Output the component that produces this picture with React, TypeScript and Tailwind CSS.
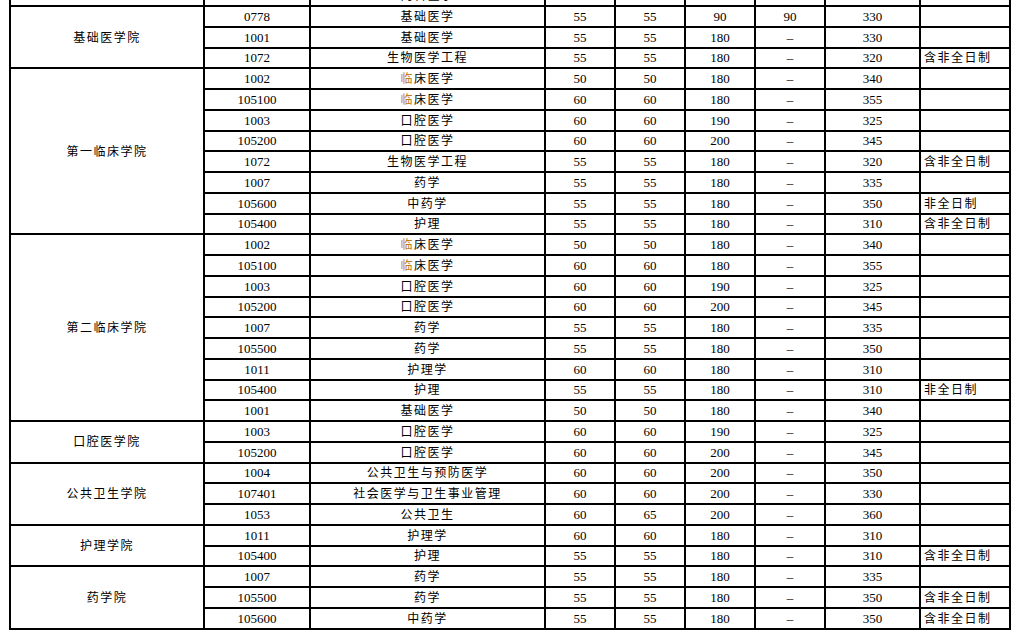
import React from 'react'

type Row = [string, string, string, string, string, string, string, string]

type Group = { college: string; rows: Row[] }

const D = '–'

// partial row cut off at the top of the screenshot
const topRow: Row = ['100104', '内科医学', '55', '55', '180', '180', '330', '']

const groups: Group[] = [
  {
    college: '基础医学院',
    rows: [
      ['0778', '基础医学', '55', '55', '90', '90', '330', ''],
      ['1001', '基础医学', '55', '55', '180', D, '330', ''],
      ['1072', '生物医学工程', '55', '55', '180', D, '320', '含非全日制'],
    ],
  },
  {
    college: '第一临床学院',
    rows: [
      ['1002', '临床医学', '50', '50', '180', D, '340', ''],
      ['105100', '临床医学', '60', '60', '180', D, '355', ''],
      ['1003', '口腔医学', '60', '60', '190', D, '325', ''],
      ['105200', '口腔医学', '60', '60', '200', D, '345', ''],
      ['1072', '生物医学工程', '55', '55', '180', D, '320', '含非全日制'],
      ['1007', '药学', '55', '55', '180', D, '335', ''],
      ['105600', '中药学', '55', '55', '180', D, '350', '非全日制'],
      ['105400', '护理', '55', '55', '180', D, '310', '含非全日制'],
    ],
  },
  {
    college: '第二临床学院',
    rows: [
      ['1002', '临床医学', '50', '50', '180', D, '340', ''],
      ['105100', '临床医学', '60', '60', '180', D, '355', ''],
      ['1003', '口腔医学', '60', '60', '190', D, '325', ''],
      ['105200', '口腔医学', '60', '60', '200', D, '345', ''],
      ['1007', '药学', '55', '55', '180', D, '335', ''],
      ['105500', '药学', '55', '55', '180', D, '350', ''],
      ['1011', '护理学', '60', '60', '180', D, '310', ''],
      ['105400', '护理', '55', '55', '180', D, '310', '非全日制'],
      ['1001', '基础医学', '50', '50', '180', D, '340', ''],
    ],
  },
  {
    college: '口腔医学院',
    rows: [
      ['1003', '口腔医学', '60', '60', '190', D, '325', ''],
      ['105200', '口腔医学', '60', '60', '200', D, '345', ''],
    ],
  },
  {
    college: '公共卫生学院',
    rows: [
      ['1004', '公共卫生与预防医学', '60', '60', '200', D, '350', ''],
      ['107401', '社会医学与卫生事业管理', '60', '60', '200', D, '330', ''],
      ['1053', '公共卫生', '60', '65', '200', D, '360', ''],
    ],
  },
  {
    college: '护理学院',
    rows: [
      ['1011', '护理学', '60', '60', '180', D, '310', ''],
      ['105400', '护理', '55', '55', '180', D, '310', '含非全日制'],
    ],
  },
  {
    college: '药学院',
    rows: [
      ['1007', '药学', '55', '55', '180', D, '335', ''],
      ['105500', '药学', '55', '55', '180', D, '350', '含非全日制'],
      ['105600', '中药学', '55', '55', '180', D, '350', '含非全日制'],
    ],
  },
]

const spanClass: Record<number, string> = {
  1: 'row-span-1',
  2: 'row-span-2',
  3: 'row-span-3',
  8: 'row-span-8',
  9: 'row-span-9',
}

const cell = 'bg-white flex items-center justify-center overflow-hidden leading-none'
const zh = 'text-[12px] tracking-[1.5px] pt-[1px]'

function Major({ name }: { name: string }) {
  // the 临 glyph shows up tinted in the source scan
  if (name.startsWith('临')) {
    return (
      <span>
        <span className="text-[#c07d1c]">临</span>
        {name.slice(1)}
      </span>
    )
  }
  return <span>{name}</span>
}

function RowCells({ row }: { row: Row }) {
  const [code, major, a, b, c, d, total, note] = row
  return (
    <>
      <div className={cell}>{code}</div>
      <div className={`${cell} ${zh}`}>
        <Major name={major} />
      </div>
      <div className={cell}>{a}</div>
      <div className={cell}>{b}</div>
      <div className={cell}>{c}</div>
      <div className={cell}>{d}</div>
      <div className={cell}>{total}</div>
      <div className={`bg-white flex items-center justify-start pl-[3px] overflow-hidden leading-none ${zh}`}>{note}</div>
    </>
  )
}

export default function App() {
  return (
    <div className="w-[1019px] h-[632px] overflow-hidden bg-white text-black font-['Liberation_Serif','Noto_Sans_CJK_SC',serif] text-[13px]">
      <div className="ml-[9px] mt-[-15.75px] grid w-fit grid-cols-[192px_104px_233px_68px_68px_68px_68px_93px_88px] auto-rows-[18.75px] gap-[2px] p-[2px] bg-black">
        {/* cut-off row from the previous block */}
        <div className={cell}></div>
        <RowCells row={topRow} />

        {groups.map((g) => (
          <React.Fragment key={g.college}>
            {g.rows.map((r, i) => (
              <React.Fragment key={i}>
                {i === 0 && (
                  <div className={`${cell} ${zh} ${spanClass[g.rows.length]}`}>{g.college}</div>
                )}
                <RowCells row={r} />
              </React.Fragment>
            ))}
          </React.Fragment>
        ))}
      </div>
    </div>
  )
}
